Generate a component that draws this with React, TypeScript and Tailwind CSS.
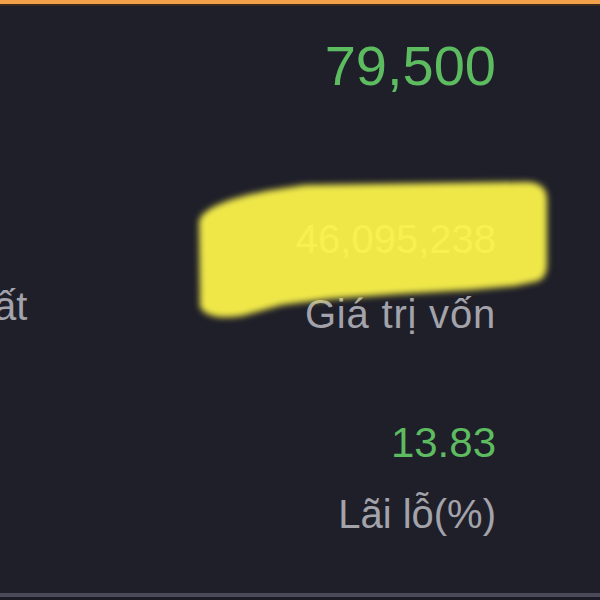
import React from 'react';

const ValueBlock: React.FC<{ children: React.ReactNode; className?: string }> = ({ children, className }) => (
    <div className={`text-right ${className ?? ''}`}>{children}</div>
);

const App: React.FC = () => {
    return (
        <div
            className="relative w-[600px] h-[600px] overflow-hidden bg-[#1f1f2a] flex flex-col"
            style={{ fontFamily: '"Liberation Sans", Arial, sans-serif' }}
        >
            <div className="h-[4px] bg-[#f2a04a]" />
            <div className="h-[2px] bg-[#3a2a1c]" />

            <div className="flex flex-col pr-[104px]">
                {/* Giá khớp */}
                <ValueBlock className="mt-[32px]">
                    <div className="text-[56px] leading-[56px] text-[#5dbb60]">79,500</div>
                </ValueBlock>

                {/* Giá trị vốn */}
                <div className="flex justify-between items-end mt-[125px]">
                    <div className="text-[40px] leading-[40px] text-[#a3a3ab] -ml-[6px] mb-[8px]">ất</div>
                    <ValueBlock>
                        <div className="text-[40px] leading-[40px] text-[#9a9a9e]">46,095,238</div>
                        <div className="text-[40px] leading-[40px] tracking-[0.8px] text-[#a3a3ab] mt-[35px]">Giá trị vốn</div>
                    </ValueBlock>
                </div>

                {/* Lãi lỗ */}
                <ValueBlock className="mt-[88px]">
                    <div className="text-[42px] leading-[42px] text-[#5dbb60]">13.83</div>
                    <div className="text-[40px] leading-[40px] text-[#a3a3ab] mt-[30px]">Lãi lỗ(%)</div>
                </ValueBlock>
            </div>

            <div className="flex-1" />
            <div className="h-[4px] bg-[#4a4a58]" />
            <div className="h-[3px] bg-[#1c1c26]" />

            {/* highlighter scribble over the hidden value */}
            <svg className="absolute inset-0 pointer-events-none" width="600" height="600" viewBox="0 0 600 600">
                <defs>
                    <filter id="soft" x="-10%" y="-30%" width="120%" height="160%">
                        <feGaussianBlur stdDeviation="3" />
                    </filter>
                </defs>
                <path
                    d="M199,222 C201,208 232,197 272,190 L305,185 L528,182 Q547,183 547,200 L547,264 Q547,280 534,282 L515,286 L470,290 L400,294 L330,299 L282,305 L242,316 Q208,321 200,307 Z"
                    fill="#fff74b"
                    opacity="0.93"
                    filter="url(#soft)"
                />
            </svg>
        </div>
    );
};

export default App;
